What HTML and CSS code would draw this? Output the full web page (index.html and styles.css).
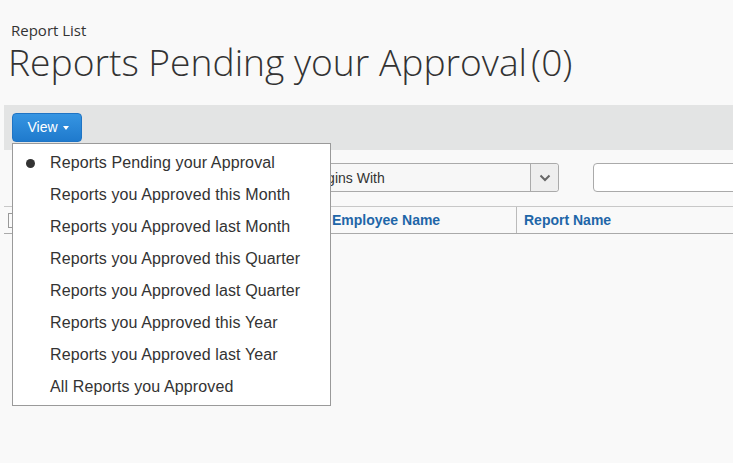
FILE: index.html
```html
<!DOCTYPE html>
<html>
<head>
<meta charset="utf-8">
<link rel="stylesheet" href="styles.css">
</head>
<body>
<div class="page">
  <div class="head">
    <div class="crumb">Report List</div>
    <h1 class="title">Reports Pending your Approval<span class="count">(0)</span></h1>
  </div>
  <div class="toolbar">
    <div class="viewwrap">
      <button class="viewbtn">View <span class="caret"></span></button>
      <ul class="menu">
        <li class="item selected"><span class="dot"></span>Reports Pending your Approval</li>
        <li class="item">Reports you Approved this Month</li>
        <li class="item">Reports you Approved last Month</li>
        <li class="item">Reports you Approved this Quarter</li>
        <li class="item">Reports you Approved last Quarter</li>
        <li class="item">Reports you Approved this Year</li>
        <li class="item">Reports you Approved last Year</li>
        <li class="item">All Reports you Approved</li>
      </ul>
    </div>
  </div>
  <div class="filters">
    <div class="select">
      <span class="selval">Begins With</span>
      <span class="selbtn"><svg width="12" height="8" viewBox="0 0 12 8"><path d="M1.5 1.5 L6 6 L10.5 1.5" fill="none" stroke="#666" stroke-width="2"/></svg></span>
    </div>
    <div class="textinput"></div>
  </div>
  <div class="thead">
    <div class="th chk"><span class="box"></span></div>
    <div class="th spacer"></div>
    <div class="th emp">Employee Name</div>
    <div class="th rep">Report Name</div>
  </div>
</div>
</body>
</html>
```
FILE: styles.css
```css
html, body {
  margin: 0;
  padding: 0;
  background: #f9f9f9;
  width: 733px;
  height: 463px;
  overflow: hidden;
}
.page {
  padding-left: 4px;
  font-family: "Liberation Sans", Arial, sans-serif;
  color: #333;
}
.head {
  padding: 20px 0 0 4px;
  height: 105px;
  box-sizing: border-box;
}
.crumb {
  font-family: "Open Sans", sans-serif;
  font-size: 15px;
  line-height: 20px;
  color: #333;
  padding-left: 3px;
}
.title {
  margin: 0;
  font-family: "Open Sans", sans-serif;
  font-weight: 300;
  font-size: 37.2px;
  line-height: 44px;
  color: #333;
  white-space: nowrap;
}
.count {
  padding-left: 4px;
}
.toolbar {
  background: #e3e4e4;
  height: 45px;
  padding: 8px 0 0 8px;
  box-sizing: border-box;
}
.viewwrap {
  position: relative;
  width: 70px;
}
.viewbtn {
  width: 70px;
  height: 29px;
  border: 1px solid #1f74c4;
  border-radius: 4px;
  background: linear-gradient(#3695e2, #1f7acd);
  color: #fff;
  font-family: "Liberation Sans", Arial, sans-serif;
  font-size: 14px;
  padding: 0 0 1px 2px;
  display: flex;
  align-items: center;
  justify-content: center;
  gap: 5px;
}
.caret {
  width: 0;
  height: 0;
  border-left: 3px solid transparent;
  border-right: 3px solid transparent;
  border-top: 4px solid #fff;
  margin-top: 1px;
}
.menu {
  position: absolute;
  left: 0;
  top: 30px;
  width: 319px;
  height: 263px;
  box-sizing: border-box;
  margin: 0;
  padding: 3px 0 0 0;
  list-style: none;
  background: #fff;
  border: 1px solid #9a9a9a;
  z-index: 10;
}
.item {
  height: 32px;
  line-height: 32px;
  padding-left: 37px;
  font-size: 16px;
  letter-spacing: 0.12px;
  color: #333;
  position: relative;
  white-space: nowrap;
}
.dot {
  position: absolute;
  left: 13px;
  top: 12px;
  width: 9px;
  height: 9px;
  border-radius: 50%;
  background: #333;
}
.filters {
  height: 56px;
  display: flex;
  align-items: flex-start;
  padding-top: 13px;
  box-sizing: border-box;
}
.select {
  flex-shrink: 0;
  margin-left: 236px;
  width: 319px;
  height: 29px;
  box-sizing: border-box;
  border: 1px solid #aaa;
  border-radius: 3px;
  background: #f7f7f7;
  display: flex;
  align-items: center;
  justify-content: space-between;
}
.selval {
  font-size: 14px;
  color: #333;
  padding-left: 69px;
}
.selbtn {
  width: 27px;
  height: 27px;
  border-left: 1px solid #aaa;
  background: #eeeeee;
  display: flex;
  align-items: center;
  justify-content: center;
  border-radius: 0 3px 3px 0;
}
.textinput {
  flex-shrink: 0;
  margin-left: 34px;
  width: 160px;
  height: 29px;
  box-sizing: border-box;
  border: 1px solid #aaa;
  border-radius: 4px;
  background: #fff;
}
.thead {
  display: flex;
  height: 28px;
  box-sizing: border-box;
  border-top: 1px solid #c8c8c8;
  border-bottom: 1px solid #aaa;
  align-items: center;
}
.th {
  flex-shrink: 0;
  font-weight: bold;
  font-size: 14px;
  color: #1f66a8;
  height: 100%;
  display: flex;
  align-items: center;
  box-sizing: border-box;
}
.chk {
  width: 20px;
  padding-left: 4px;
}
.box {
  width: 10px;
  height: 15px;
  border: 1px solid #999;
  background: #fafafa;
  box-sizing: border-box;
}
.spacer {
  width: 300px;
}
.emp {
  width: 193px;
  padding-left: 8px;
  border-right: 1px solid #bbb;
}
.rep {
  padding-left: 7px;
}
```
